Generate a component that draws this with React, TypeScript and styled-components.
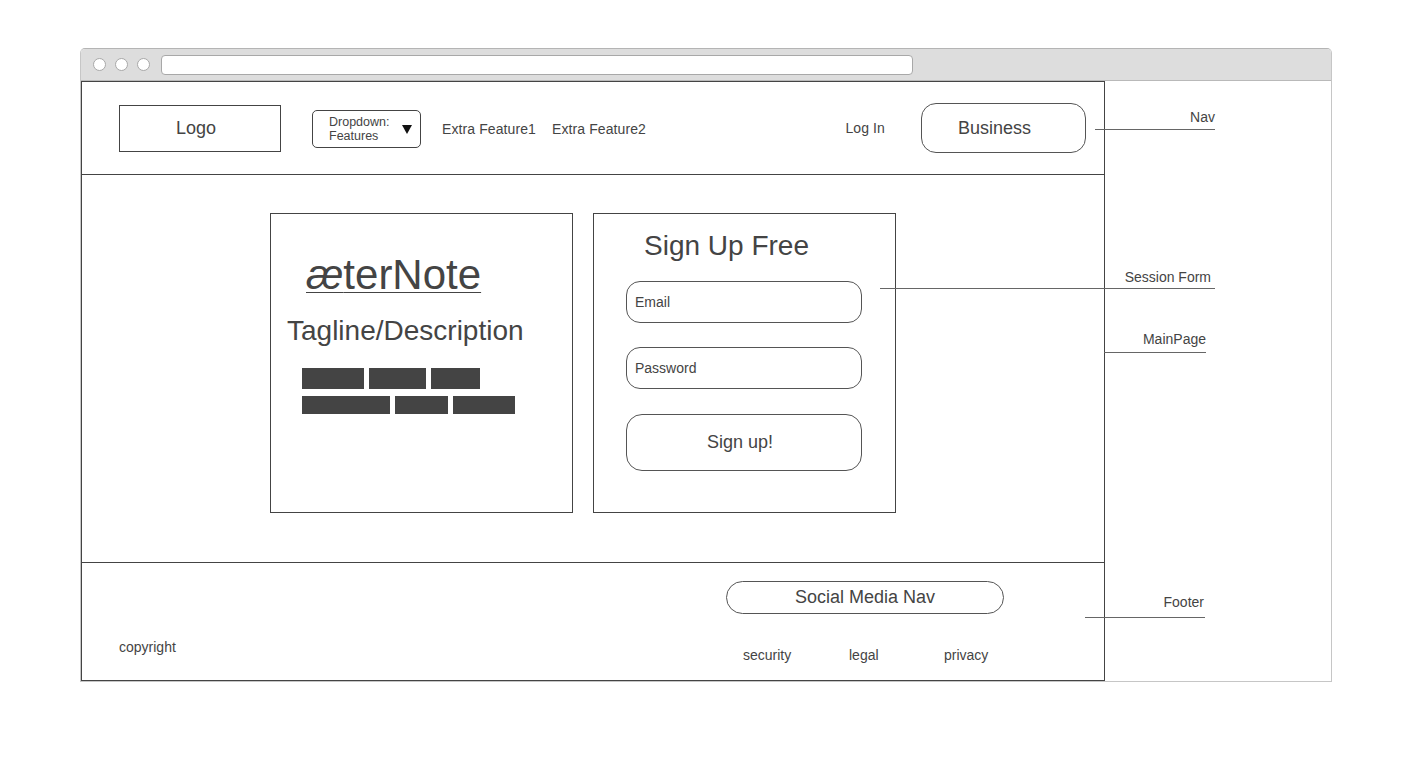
import React from "react";
import styled, { createGlobalStyle } from "styled-components";

const GlobalStyle = createGlobalStyle`
  html, body {
    margin: 0;
    padding: 0;
    background: #ffffff;
  }
  body {
    font-family: "Liberation Sans", Arial, Helvetica, sans-serif;
    color: #444444;
  }
  * { box-sizing: border-box; }
`;

const Stage = styled.div`
  width: 1410px;
  height: 760px;
  padding: 48px 0 0 80px;
`;

const Window = styled.div`
  width: 1252px;
  border: 1px solid #c6c6c6;
  border-top-color: #b4b4b4;
  border-radius: 5px 5px 0 0;
  background: #ffffff;
`;

const TitleBar = styled.div`
  height: 32px;
  background: #dddddd;
  border-bottom: 1px solid #b9b9b9;
  border-radius: 4px 4px 0 0;
  display: flex;
  align-items: center;
  padding-left: 12px;
  gap: 9px;
`;

const Dot = styled.span`
  width: 13px;
  height: 13px;
  border-radius: 50%;
  background: #ffffff;
  border: 1px solid #a8a8a8;
`;

const UrlBar = styled.div`
  width: 752px;
  height: 20px;
  margin-left: 2px;
  background: #ffffff;
  border: 1px solid #a8a8a8;
  border-radius: 4px;
`;

const WindowBody = styled.div`
  position: relative;
  height: 600px;
  display: flex;
`;

const Wireframe = styled.div`
  width: 1024px;
  height: 600px;
  border: 1px solid #444444;
  display: flex;
  flex-direction: column;
`;

/* ---------- Nav ---------- */
const Nav = styled.nav`
  height: 93px;
  flex: none;
  border-bottom: 1px solid #444444;
  display: flex;
  align-items: center;
  padding: 0 18px 0 37px;
`;

const LogoBox = styled.div`
  width: 162px;
  height: 47px;
  border: 1px solid #444444;
  display: flex;
  align-items: center;
  justify-content: center;
  padding-right: 8px;
  font-size: 18px;
  color: #444444;
`;

const Dropdown = styled.div`
  width: 109px;
  height: 38px;
  margin: 2px 0 0 31px;
  border: 1px solid #444444;
  border-radius: 5px;
  display: flex;
  align-items: center;
  justify-content: space-between;
  padding: 0 8px 0 16px;
`;

const DropdownLabel = styled.div`
  font-size: 12.5px;
  line-height: 13.5px;
  color: #444444;
  padding-top: 1px;
`;

const NavLinks = styled.div`
  display: flex;
  gap: 16px;
  margin: 2px 0 0 21px;
`;

const NavText = styled.span`
  font-size: 14px;
  letter-spacing: 0.1px;
  color: #444444;
`;

const NavRight = styled.div`
  margin-left: auto;
  display: flex;
  align-items: center;
  gap: 36px;
`;

const PillButton = styled.div<{ $w: number; $h: number; $r: number; $shift?: number }>`
  width: ${(p) => p.$w}px;
  height: ${(p) => p.$h}px;
  border: 1px solid #555555;
  border-radius: ${(p) => p.$r}px;
  display: flex;
  align-items: center;
  justify-content: center;
  padding-right: ${(p) => (p.$shift ?? 0) * 2}px;
  font-size: 18px;
  color: #444444;
`;

/* ---------- Main ---------- */
const Main = styled.main`
  height: 388px;
  flex: none;
  border-bottom: 1px solid #444444;
  display: flex;
  gap: 20px;
  padding: 38px 0 0 188px;
`;

const Card = styled.section`
  width: 303px;
  height: 300px;
  border: 1px solid #444444;
  display: flex;
  flex-direction: column;
  align-items: flex-start;
`;

const Brand = styled.a`
  margin: 37px 0 0 35px;
  font-size: 42px;
  line-height: 48px;
  color: #444444;
  text-decoration: underline;
  text-decoration-thickness: 1px;
  text-underline-offset: 3px;
`;

const BrandAe = styled.span`
  font-style: italic;
`;

const Tagline = styled.h2`
  margin: 15px 0 0 16px;
  font-size: 28px;
  line-height: 34px;
  font-weight: normal;
  color: #444444;
`;

const BarRows = styled.div`
  margin: 20px 0 0 31px;
  display: flex;
  flex-direction: column;
  gap: 7px;
`;

const BarRow = styled.div<{ $h: number }>`
  display: flex;
  gap: 5px;
  height: ${(p) => p.$h}px;
`;

const Bar = styled.span<{ $w: number }>`
  width: ${(p) => p.$w}px;
  background: #444444;
`;

const FormTitle = styled.h1`
  margin: 15px 0 0 50px;
  font-size: 28px;
  line-height: 34px;
  font-weight: normal;
  color: #444444;
`;

const Field = styled.div<{ $first?: boolean }>`
  width: 236px;
  height: 42px;
  margin: ${(p) => (p.$first ? 18 : 24)}px 0 0 32px;
  border: 1px solid #555555;
  border-radius: 14px;
  display: flex;
  align-items: center;
  padding-left: 8px;
  font-size: 14px;
  color: #444444;
`;

const SubmitWrap = styled.div`
  margin: 25px 0 0 32px;
`;

/* ---------- Footer ---------- */
const Footer = styled.footer`
  flex: 1;
  display: flex;
  padding: 0 100px 0 37px;
`;

const Copyright = styled.div`
  margin-top: 76px;
  font-size: 14px;
  line-height: 16px;
  color: #444444;
`;

const FooterRight = styled.div`
  margin-left: auto;
  padding-top: 18px;
  display: flex;
  flex-direction: column;
`;

const FooterLinks = styled.div`
  margin-top: 33px;
  padding-left: 17px;
  display: grid;
  grid-template-columns: 106px 95px auto;
  font-size: 14px;
  line-height: 16px;
  color: #444444;
`;

/* ---------- Annotations ---------- */
const Annotation = styled.div<{ $x: number; $y: number; $w: number; $lift: number; $pr: number }>`
  position: absolute;
  left: ${(p) => p.$x}px;
  top: ${(p) => p.$y - 30}px;
  width: ${(p) => p.$w}px;
  height: 31px;
  border-bottom: 1px solid #666666;
  display: flex;
  align-items: flex-end;
  justify-content: flex-end;
  padding: 0 ${(p) => p.$pr}px ${(p) => p.$lift - 8}px 0;
  font-size: 14px;
  line-height: 16px;
  color: #444444;
`;

const notes = [
  { label: "Nav", x: 1014, y: 48, w: 120, lift: 12, pr: 0 },
  { label: "Session Form", x: 799, y: 207, w: 335, lift: 11, pr: 4 },
  { label: "MainPage", x: 1023, y: 271, w: 102, lift: 13, pr: 0 },
  { label: "Footer", x: 1004, y: 536, w: 120, lift: 15, pr: 1 },
];

export default function App() {
  return (
    <>
      <GlobalStyle />
      <Stage>
        <Window>
          <TitleBar>
            <Dot />
            <Dot />
            <Dot />
            <UrlBar />
          </TitleBar>
          <WindowBody>
            <Wireframe>
              <Nav>
                <LogoBox>Logo</LogoBox>
                <Dropdown>
                  <DropdownLabel>
                    Dropdown:
                    <br />
                    Features
                  </DropdownLabel>
                  <svg width="10" height="9" viewBox="0 0 10 9">
                    <polygon points="0,0 10,0 5,9" fill="#111" />
                  </svg>
                </Dropdown>
                <NavLinks>
                  <NavText>Extra Feature1</NavText>
                  <NavText>Extra Feature2</NavText>
                </NavLinks>
                <NavRight>
                  <NavText>Log In</NavText>
                  <PillButton $w={165} $h={50} $r={15} $shift={9}>
                    Business
                  </PillButton>
                </NavRight>
              </Nav>
              <Main>
                <Card>
                  <Brand>
                    <BrandAe>æ</BrandAe>terNote
                  </Brand>
                  <Tagline>Tagline/Description</Tagline>
                  <BarRows>
                    <BarRow $h={21}>
                      <Bar $w={62} />
                      <Bar $w={57} />
                      <Bar $w={49} />
                    </BarRow>
                    <BarRow $h={18}>
                      <Bar $w={88} />
                      <Bar $w={53} />
                      <Bar $w={62} />
                    </BarRow>
                  </BarRows>
                </Card>
                <Card>
                  <FormTitle>Sign Up Free</FormTitle>
                  <Field $first>Email</Field>
                  <Field>Password</Field>
                  <SubmitWrap>
                    <PillButton $w={236} $h={57} $r={16} $shift={4}>
                      Sign up!
                    </PillButton>
                  </SubmitWrap>
                </Card>
              </Main>
              <Footer>
                <Copyright>copyright</Copyright>
                <FooterRight>
                  <PillButton $w={278} $h={33} $r={17}>
                    Social Media Nav
                  </PillButton>
                  <FooterLinks>
                    <span>security</span>
                    <span>legal</span>
                    <span>privacy</span>
                  </FooterLinks>
                </FooterRight>
              </Footer>
            </Wireframe>
            {notes.map((n) => (
              <Annotation key={n.label} $x={n.x} $y={n.y} $w={n.w} $lift={n.lift} $pr={n.pr}>
                {n.label}
              </Annotation>
            ))}
          </WindowBody>
        </Window>
      </Stage>
    </>
  );
}
